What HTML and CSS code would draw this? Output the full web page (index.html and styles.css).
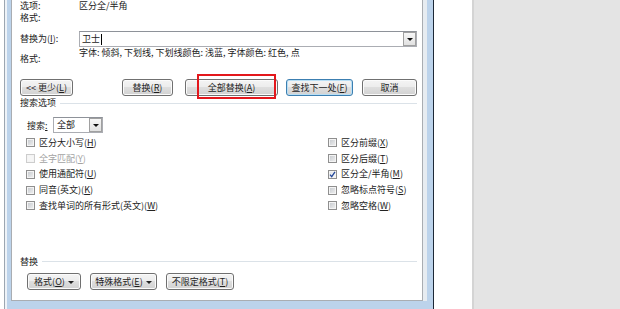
FILE: index.html
```html
<!DOCTYPE html>
<html lang="zh-CN">
<head>
  <meta charset="UTF-8" />
  <title>查找和替换</title>
  <link rel="stylesheet" href="styles.css">
</head>
<body>
  <div class="screen">
    <div class="doc-left"></div>

    <div class="frame">
      <div class="panel">
        <div class="row row-opt"><span class="lbl">选项:</span><span>区分全/半角</span></div>
        <div class="row row-fmt"><span class="lbl">格式:</span></div>

        <div class="row row-replace">
          <span class="lbl">替换为(<u>I</u>):</span>
          <div class="combo">
            <span class="combo-text">卫士<span class="caret"></span></span>
            <span class="drop"><span class="tri"></span></span>
          </div>
        </div>

        <div class="row row-desc">
          <span class="lbl lbl-low">格式:</span>
          <span class="desc">字体: 倾斜, 下划线, 下划线颜色: 浅蓝, 字体颜色: 红色, 点</span>
        </div>

        <div class="btn-row">
          <button class="btn w-less">&lt;&lt; 更少(<u>L</u>)</button>
          <button class="btn w-rep">替换(<u>R</u>)</button>
          <span class="mark"><button class="btn w-all">全部替换(<u>A</u>)</button></span>
          <button class="btn btn-default w-next">查找下一处(<u>F</u>)</button>
          <button class="btn w-cancel">取消</button>
        </div>

        <div class="group-head"><span>搜索选项</span></div>

        <div class="search-row">
          <span class="search-lbl">搜索<u>:</u></span>
          <div class="select">
            <span class="select-text">全部</span>
            <span class="drop"><span class="tri"></span></span>
          </div>
        </div>

        <div class="checks">
          <label class="check"><span class="box"></span>区分大小写(<u>H</u>)</label>
          <label class="check disabled"><span class="box"></span>全字匹配(<u>Y</u>)</label>
          <label class="check"><span class="box"></span>使用通配符(<u>U</u>)</label>
          <label class="check"><span class="box"></span>同音(英文)(<u>K</u>)</label>
          <label class="check"><span class="box"></span>查找单词的所有形式(英文)(<u>W</u>)</label>

          <label class="check"><span class="box"></span>区分前缀(<u>X</u>)</label>
          <label class="check"><span class="box"></span>区分后缀(<u>T</u>)</label>
          <label class="check"><span class="box checked"><svg viewBox="0 0 9 9" width="9" height="9"><path d="M2 4.6 L3.7 6.6 L7 1.8" fill="none" stroke="#23479a" stroke-width="1.3"/></svg></span>区分全/半角(<u>M</u>)</label>
          <label class="check"><span class="box"></span>忽略标点符号(<u>S</u>)</label>
          <label class="check"><span class="box"></span>忽略空格(<u>W</u>)</label>
        </div>

        <div class="group-head group-replace"><span>替换</span></div>

        <div class="btn-row bottom-row">
          <button class="btn w-fmt">格式(<u>O</u>) <span class="arrow"></span></button>
          <button class="btn w-special">特殊格式(<u>E</u>) <span class="arrow"></span></button>
          <button class="btn w-nofmt">不限定格式(<u>T</u>)</button>
        </div>
      </div>
    </div>

    <div class="doc-right"></div>
    <div class="backdrop"></div>
  </div>
</body>
</html>
```

FILE: styles.css
```css
* {
    box-sizing: border-box;
}

body {
    margin: 0;
    width: 620px;
    height: 309px;
    overflow: hidden;
    font-family: "Noto Sans CJK SC", "Noto Sans", sans-serif;
    font-size: 9px;
    color: #222;
    background: #e4e4e4;
}

u {
    text-decoration: underline;
    text-underline-offset: 1px;
}

.screen {
    display: flex;
    height: 309px;
}

.doc-left {
    width: 4px;
    background: #fff;
}

.frame {
    width: 430px;
    border-left: 1px solid #9ca6b1;
    border-right: 1px solid #1d2836;
    background: #bcd3eb;
    padding: 0 10px 8px 6px;
    box-shadow: inset 2px 0 #eef3f8;
}

.panel {
    height: 301px;
    background: #fff;
    border: 1px solid #a9adb2;
    border-top: none;
    padding: 0 5px 0 8px;
    box-shadow: 4px 0 0 #e7ecf1;
}

.row {
    display: flex;
    line-height: 12px;
}

.lbl {
    width: 59px;
    flex: none;
}

.row-opt {
    height: 12px;
}

.row-fmt {
    height: 12px;
}

.row-replace {
    margin-top: 7px;
    height: 16px;
    align-items: center;
}

.combo {
    flex: 1;
    height: 16px;
    display: flex;
    border: 1px solid #abadb3;
    border-top-color: #8e9299;
}

.combo-text {
    flex: 1;
    padding-left: 2px;
    line-height: 14px;
    display: flex;
    align-items: center;
}

.caret {
    width: 1px;
    height: 11px;
    background: #000;
    margin-left: 1px;
}

.drop {
    width: 13px;
    border: 1px solid #a0a0a0;
    background: linear-gradient(#f7f7f7, #e1e1e1);
    display: flex;
    align-items: center;
    justify-content: center;
}

.tri {
    width: 0;
    height: 0;
    border-left: 3px solid transparent;
    border-right: 3px solid transparent;
    border-top: 3px solid #111;
}

.row-desc {
    height: 18px;
}

.lbl-low {
    padding-top: 6px;
}

.btn-row {
    display: flex;
    margin-top: 14px;
}

.btn {
    height: 17px;
    padding: 0;
    font: inherit;
    color: #1e1e1e;
    line-height: 15px;
    text-align: center;
    white-space: nowrap;
    border: 1px solid #707070;
    border-radius: 3px;
    background: linear-gradient(#f4f4f4, #ececec 50%, #dedede 50%, #d2d2d2);
    box-shadow: inset 0 0 0 1px #fbfbfb;
}

.btn-default {
    border-color: #3c7fb1;
    box-shadow: inset 0 0 0 1px #b9dff5;
}

.w-less { width: 53px; }
.w-rep { width: 51px; margin-left: 49px; }
.w-all { width: 93px; }
.w-next { width: 67px; margin-left: 8px; }
.w-cancel { width: 55px; margin-left: 9px; }

.mark {
    position: relative;
    margin-left: 12px;
}

.mark::after {
    content: "";
    position: absolute;
    left: 12px;
    top: -5px;
    width: 75px;
    height: 21px;
    border: 2px solid #e3171c;
}

.group-head {
    display: flex;
    align-items: center;
    margin-top: 1px;
    line-height: 12px;
}

.group-head::after {
    content: "";
    flex: 1;
    border-top: 1px solid #dbe2e8;
    margin-left: 4px;
}

.search-row {
    display: flex;
    align-items: center;
    margin-top: 8px;
    padding-left: 7px;
    height: 16px;
}

.search-lbl {
    width: 26px;
}

.select {
    width: 50px;
    height: 16px;
    display: flex;
    border: 1px solid #abadb3;
    border-top-color: #8e9299;
}

.select-text {
    flex: 1;
    padding-left: 3px;
    line-height: 14px;
}

.checks {
    display: grid;
    grid-template-columns: 302px 1fr;
    grid-template-rows: repeat(5, 15.75px);
    grid-auto-flow: column;
    margin-top: 2px;
    padding-left: 6px;
}

.check {
    display: flex;
    align-items: center;
    line-height: 12px;
}

.box {
    width: 9px;
    height: 9px;
    margin-right: 4px;
    border: 1px solid #8f8f8f;
    background: linear-gradient(135deg, #c3c7cc, #f2f2f2);
    box-shadow: inset 0 0 0 1px #f4f4f4;
    display: flex;
}

.box.checked {
    background: linear-gradient(135deg, #dfe3e7, #fafafa);
}

.box svg {
    margin: -1px;
}

.disabled {
    color: #a3a3a3;
}

.disabled .box {
    border-color: #cdcdcd;
    background: #f6f6f6;
}

.group-replace {
    margin-top: 42px;
}

.bottom-row {
    margin-top: 5px;
    padding-left: 7px;
    gap: 9px;
}

.w-fmt { width: 54px; }
.w-special { width: 67px; }
.w-nofmt { width: 68px; }

.arrow {
    display: inline-block;
    vertical-align: middle;
    margin-left: 1px;
    width: 0;
    height: 0;
    border-left: 3px solid transparent;
    border-right: 3px solid transparent;
    border-top: 3px solid #222;
}

.doc-right {
    width: 40px;
    background: #fff;
    border-right: 2px solid #d4d4d4;
}

.backdrop {
    flex: 1;
    background: #e4e4e4;
}
```
